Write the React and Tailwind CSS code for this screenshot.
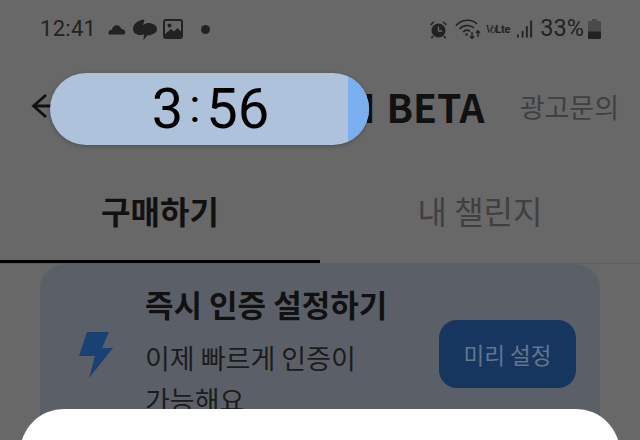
import React from "react";

const font = "font-['Noto_Sans_CJK_KR','Noto_Sans',sans-serif]";

const StatusLeft = () => (
  <div className="flex items-center text-[#222222]">
    <span className="font-['Roboto',sans-serif] text-[22px] leading-none tracking-[0.3px]">12:41</span>
    <svg width="18" height="14" viewBox="0 0 18 14" className="ml-[12px]" fill="#222222">
      <path d="M1 12.500c-1.400-2.600.5-5 2.800-4.700C4.600 4.600 7 3 9.300 3.300c2 .3 3.500 1.800 3.900 3.700 2.500-.4 4.600 1.600 3.900 4.200-.2.800-.8 1.300-1.700 1.300H2.600c-.7 0-1.300 0-1.600.500z" />
    </svg>
    <svg width="24" height="21" viewBox="0 0 24 21" className="ml-[7px]" fill="#222222">
      <path d="M11.500.5 10 6l4-2C19 3.500 24 6 24 10c0 4-5 6.300-9.500 6.300L10.500 21l.5-5.500-3 .5C3.500 16.300 0 14 0 10 0 4.500 5.500 1 11.500.5z" />
    </svg>
    <svg width="20" height="20" viewBox="0 0 20 20" className="ml-[6px]">
      <rect x="1" y="1" width="18" height="18" rx="2" fill="none" stroke="#222222" strokeWidth="2" />
      <circle cx="6.500" cy="6.500" r="2" fill="#222222" />
      <path d="M2 15 8 10l3 2.500L14.500 9 18 12.500V18H2z" fill="#222222" />
    </svg>
    <span className="ml-[18px] w-[9px] h-[9px] rounded-full bg-[#222222]" />
  </div>
);

const StatusRight = () => (
  <div className="flex items-center text-[#222222]">
    <svg width="19" height="19" viewBox="0 0 19 19" fill="#222222">
      <circle cx="9.500" cy="10.500" r="7" />
      <path d="M9.500 6.500v4.500h3.500" fill="none" stroke="#686868" strokeWidth="1.300" />
      <path d="M1 4.500 4.500 1.200 5.500 2.300 2 5.600zM18 4.500 14.500 1.200 13.500 2.300 17 5.600z" />
      <path d="M4 16 2.500 18.200M15 16l1.500 2.200" stroke="#222222" strokeWidth="1.600" />
    </svg>
    <svg width="26" height="20" viewBox="0 0 26 20" className="ml-[7px]" fill="none" stroke="#222222" strokeWidth="1.600">
      <path d="M1 6.500C7-.2 17-.2 22 5" />
      <path d="M4.500 10C8.500 5.500 15 5.500 19 9" />
      <path d="M8 13c2.200-2.200 5-2.200 7-.6" />
      <circle cx="11.500" cy="15.500" r="1.300" fill="#222222" stroke="none" />
      <path d="M17 13v6.500M15 17.300l2 2.200 2-2.200M23 18v-6M21 14l2-2.200 2 2.200" strokeWidth="1.400" />
    </svg>
    <span className="ml-[4px] font-['Liberation_Serif',serif] italic text-[12px] leading-none tracking-[-1px]">Vo</span>
    <span className="font-['Roboto',sans-serif] font-bold text-[11px] leading-none tracking-[-0.2px]">Lte</span>
    <svg width="17" height="20" viewBox="0 0 18 20" className="ml-[6px]" fill="#222222">
      <rect x="1" y="16" width="2" height="3" />
      <rect x="6" y="12" width="2" height="7" />
      <rect x="10.500" y="7" width="2" height="12" />
      <rect x="15" y="1" width="2" height="18" />
    </svg>
    <span className="ml-[7px] font-['Roboto',sans-serif] text-[23.500px] leading-none">33%</span>
    <svg width="13" height="20" viewBox="0 0 13 20" className="ml-[4px]">
      <path d="M4 0h5v2h3a1 1 0 0 1 1 1v15.500a1.500 1.500 0 0 1-1.500 1.500h-10A1.500 1.500 0 0 1 0 18.500V3a1 1 0 0 1 1-1h3z" fill="#4a4a4a" />
      <path d="M0 12.500h13v6a1.500 1.500 0 0 1-1.500 1.500h-10A1.500 1.500 0 0 1 0 18.500z" fill="#222222" />
    </svg>
  </div>
);

const App = () => {
  return (
    <div className={`relative w-[640px] h-[440px] overflow-hidden bg-[#686868] ${font}`}>
      {/* Status bar */}
      <div className="flex items-center justify-between h-[58px] pl-[40px] pr-[39px]">
        <StatusLeft />
        <StatusRight />
      </div>

      {/* Header */}
      <div className="flex items-center justify-between h-[96px] pl-[30px] pr-[21px]">
        <svg width="24" height="32" viewBox="0 0 24 32" fill="none" stroke="#111111" strokeWidth="2.800">
          <path d="M24 16H4M16 5 3.500 16 16 27" />
        </svg>
        <div className="flex items-center gap-[35px]">
          <span className="text-[39px] font-bold leading-none text-[#111111] [word-spacing:2px]">AI BETA</span>
          <span className="text-[27px] leading-none text-[#404040]">광고문의</span>
        </div>
      </div>

      {/* Tabs */}
      <div className="grid grid-cols-2 h-[110px] border-b border-[#5e5e5e]">
        <div className="flex items-center justify-center border-b-[3px] border-black pt-[6px]">
          <span className="text-[32px] font-bold leading-none text-[#111111]">구매하기</span>
        </div>
        <div className="flex items-center justify-center pt-[3px]">
          <span className="text-[32px] font-normal leading-none text-[#404040]">내 챌린지</span>
        </div>
      </div>

      {/* Card */}
      <div className="flex items-start mx-[40px] h-[200px] rounded-t-[24px] bg-[#5b6068]">
        <svg width="34" height="46" viewBox="0 0 34 46" className="ml-[39px] mt-[68px] shrink-0" fill="#1a4173">
          <path d="M8 0h22l-7 16h11L10 46l6-22H0z" />
        </svg>
        <div className="ml-[32px] w-[270px] pt-[16px]">
          <div className="text-[31px] font-bold leading-[48px] whitespace-nowrap text-[#111111]">즉시 인증 설정하기</div>
          <div className="mt-[9px] text-[27px] leading-[42px] text-[#1c1c1c]">이제 빠르게 인증이<br />가능해요</div>
        </div>
        <button className="ml-[24px] mt-[56px] w-[137px] h-[68px] rounded-[18px] bg-[#16365f] text-[22.500px] leading-none text-[#63758e]">
          미리 설정
        </button>
      </div>

      {/* Timer pill */}
      <div className="absolute left-[50px] top-[73px] w-[319px] h-[72px] rounded-full overflow-hidden bg-[#aec2dc] shadow-[0_1px_4px_rgba(0,0,0,0.25)]">
        <div className="flex items-center justify-center w-[298px] h-full gap-[6px] pl-[23px] font-['Roboto',sans-serif] text-[56px] leading-none text-black">
          <span>3</span>
          <span className="pb-[6px] text-[46px]">:</span>
          <span>56</span>
        </div>
        <div className="absolute right-0 top-0 bottom-0 w-[21px] bg-[#79aeef]" />
      </div>

      {/* Bottom sheet */}
      <div className="absolute left-[20px] top-[409px] w-[600px] h-[80px] rounded-t-[44px] bg-white" />
    </div>
  );
};

export default App;
